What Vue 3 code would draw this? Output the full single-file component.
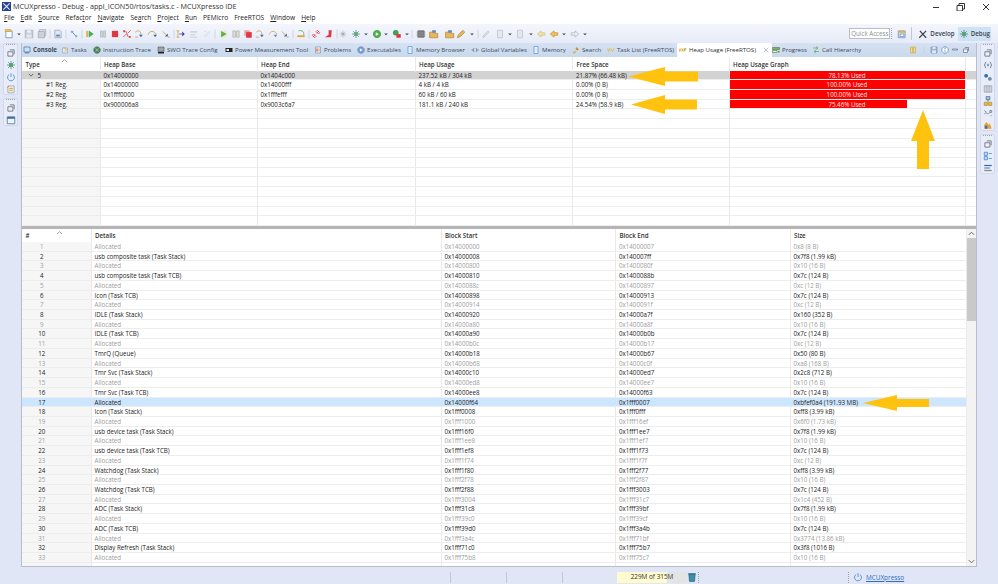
<template>
  <div class="ide">
    <div class="titlebar">
      <svg class="logo" viewBox="0 0 10 10"><rect width="10" height="10" fill="#26418f" /><path d="M1.5 1.5l7 7M8.5 1.5l-7 7" stroke="#dfe6ff" stroke-width="1.3" /></svg>
      <span class="title">MCUXpresso - Debug - appl_ICON50/rtos/tasks.c - MCUXpresso IDE</span>
      <div class="winctl">
        <svg viewBox="0 0 62 10"><path d="M0 5.5h6" stroke="#333" /><path d="M24 3.5h5.5v5.5h-5.5zM26 3.5v-2h5.5v5.5h-2" fill="none" stroke="#333" /><path d="M50 2l6 6M56 2l-6 6" stroke="#333" /></svg>
      </div>
    </div>

    <div class="menubar">
      <span v-for="m in menus" :key="m[0] + m[1]" class="menu">{{ m[0] }}<u>{{ m[1] }}</u>{{ m[2] }}</span>
    </div>

    <div class="toolbar">
      <span v-for="(t, i) in toolbar" :key="i" class="slot" :style="{ width: t.w + 'px' }">
        <svg class="ico" viewBox="0 0 16 16"><path v-for="(s, j) in glyphs[t.g]" :key="j" :d="s[0]" :fill="s[1] || 'none'" :stroke="s[2] || 'none'" /></svg>
      </span>
      <div class="tb-right">
        <span class="quick">Quick Access</span>
        <span class="grip-v"></span>
        <svg class="ico" viewBox="0 0 16 16"><path v-for="(s, j) in glyphs.persp" :key="j" :d="s[0]" :fill="s[1] || 'none'" :stroke="s[2] || 'none'" /></svg>
        <span class="vsep"></span>
        <span class="persp">
          <svg class="ico" viewBox="0 0 16 16"><path d="M2 14L13 3M3 3l10 11" stroke="#444" stroke-width="2" fill="none" /></svg>
          Develop
        </span>
        <span class="persp on">
          <svg class="ico" viewBox="0 0 16 16"><path v-for="(s, j) in glyphs.bug" :key="j" :d="s[0]" :fill="s[1] || 'none'" :stroke="s[2] || 'none'" /></svg>
          Debug
        </span>
      </div>
    </div>

    <div class="body">
      <aside class="rail">
        <div v-for="(grp, i) in leftRail" :key="i" class="railgroup">
          <i class="dots"></i>
          <svg v-for="g in grp" :key="g" class="ico" viewBox="0 0 16 16"><path v-for="(s, j) in glyphs[g]" :key="j" :d="s[0]" :fill="s[1] || 'none'" :stroke="s[2] || 'none'" /></svg>
        </div>
      </aside>

      <main class="panel">
        <div class="tabs">
          <span v-for="t in tabs" :key="t.label" class="tab" :class="{ active: t.active, bold: t.bold }" :style="{ width: t.w + 'px' }">
            <svg class="ico small" viewBox="0 0 16 16"><path v-for="(s, j) in glyphs[t.g]" :key="j" :d="s[0]" :fill="s[1] || 'none'" :stroke="s[2] || 'none'" /></svg>
            <span class="tablabel">{{ t.label }}</span>
            <svg v-if="t.active" class="closex" viewBox="0 0 8 8"><path d="M1 1l6 6M7 1L1 7" stroke="#9aa" fill="none" /></svg>
          </span>
          <div class="tabtools">
            <svg v-for="g in tabTools" :key="g" class="ico small" viewBox="0 0 16 16"><path v-for="(s, j) in glyphs[g]" :key="j" :d="s[0]" :fill="s[1] || 'none'" :stroke="s[2] || 'none'" /></svg>
          </div>
        </div>

        <section class="upper">
          <div class="grid top head">
            <div v-for="(h, i) in topHead" :key="i" class="cell">{{ h }}<svg v-if="i === 0" class="caret" viewBox="0 0 8 4"><path d="M1 3.5L4 .8l3 2.7" fill="none" stroke="#999" /></svg></div>
            <div class="cell"></div>
          </div>
          <div v-for="(r, i) in heapRows" :key="i" class="grid top row" :class="{ sel: i === 0 }">
            <div class="cell first" :class="{ child: i > 0 }">
              <svg v-if="i === 0" class="twist" viewBox="0 0 8 8"><path d="M1 2.5l3 3 3-3" fill="none" stroke="#444" /></svg>{{ r.type }}
            </div>
            <div class="cell">{{ r.base }}</div>
            <div class="cell">{{ r.end }}</div>
            <div class="cell">{{ r.usage }}</div>
            <div class="cell">{{ r.free }}</div>
            <div class="cell graph">
              <span class="fill" :style="{ width: r.bar + '%' }"></span>
              <span class="graphtext">{{ r.used }}</span>
            </div>
            <div class="cell"></div>
          </div>
          <div v-for="n in 13" :key="'e' + n" class="grid top row">
            <div class="cell first"></div>
            <div v-for="c in 6" :key="c" class="cell"></div>
          </div>
        </section>

        <div class="sash"></div>

        <section class="lower">
          <div class="tablewrap">
            <div class="grid btm head">
              <div v-for="(h, i) in blockHead" :key="h" class="cell">{{ h }}<svg v-if="i === 0" class="caret" viewBox="0 0 8 4"><path d="M1 3.5L4 .8l3 2.7" fill="none" stroke="#999" /></svg></div>
            </div>
            <div v-for="r in blockRows" :key="r.n" class="grid btm row" :class="{ dim: r.dim, picked: r.n === 17 }">
              <div class="cell first num">{{ r.n }}</div>
              <div class="cell">{{ r.details }}</div>
              <div class="cell">{{ r.start }}</div>
              <div class="cell">{{ r.end }}</div>
              <div class="cell">{{ r.size }}</div>
            </div>
            <div class="grid btm row">
              <div class="cell first"></div>
              <div v-for="c in 4" :key="c" class="cell"></div>
            </div>
          </div>
          <div class="scroll">
            <svg class="sarrow" viewBox="0 0 8 6"><path d="M1 4.5L4 1.5l3 3" fill="none" stroke="#555" /></svg>
            <div class="track"><div class="thumb"></div></div>
            <svg class="sarrow" viewBox="0 0 8 6"><path d="M1 1.5L4 4.5l3-3" fill="none" stroke="#555" /></svg>
          </div>
        </section>
      </main>

      <aside class="rail">
        <div v-for="(grp, i) in rightRail" :key="i" class="railgroup">
          <i class="dots"></i>
          <svg v-for="(g, k) in grp" :key="k" class="ico" viewBox="0 0 16 16"><path v-for="(s, j) in glyphs[g]" :key="j" :d="s[0]" :fill="s[1] || 'none'" :stroke="s[2] || 'none'" /></svg>
        </div>
      </aside>
    </div>

    <footer class="status">
      <span class="sline first-line"></span>
      <span class="sline"></span>
      <span class="sline"></span>
      <span class="heap"><span class="heapfill"></span><span class="heaptext">229M of 315M</span></span>
      <svg class="ico trash" viewBox="0 0 16 16"><path d="M3 4h10l-1 11H4z" fill="#3d8fa8" stroke="#2a6a80" /><path d="M2 3h12" stroke="#2a6a80" stroke-width="2" /></svg>
      <span class="grip-v g2"></span>
      <span class="grip-v g3"></span>
      <svg class="ico" viewBox="0 0 16 16"><path v-for="(s, j) in glyphs.power" :key="j" :d="s[0]" :fill="s[1] || 'none'" :stroke="s[2] || 'none'" /></svg>
      <a class="link">MCUXpresso</a>
    </footer>

    <svg class="notes" viewBox="0 0 998 584">
      <path v-for="a in arrows" :key="a" :d="a" fill="#ffc30f" />
    </svg>
  </div>
</template>

<script setup>
const menus = [
  ['', 'F', 'ile'], ['', 'E', 'dit'], ['', 'S', 'ource'], ['Refac', 't', 'or'], ['', 'N', 'avigate'],
  ['Se', 'a', 'rch'], ['', 'P', 'roject'], ['', 'R', 'un'], ['PEMicro', '', ''], ['FreeRTOS', '', ''],
  ['', 'W', 'indow'], ['', 'H', 'elp'],
]

const g = {
  grey: '#c9ced6',
  line: '#9aa3ae',
  red: '#e0242c',
  green: '#3aa53a',
  orange: '#e9a23b',
  blue: '#2f7fd0',
}

const glyphs = {
  new: [['M3 3h10v11H3z', '#fff', '#4f7fb5'], ['M2 1h9v3H2z', '#f2c04a', '#c99a2e']],
  drop: [['M5 7h6l-3 3z', '#333']],
  sep: [['M8 1v14', null, '#c3c9d4']],
  save: [['M2 2h12v12H2z', g.grey, g.line], ['M5 2h6v4H5z', '#eef0f4'], ['M4 9h8v5H4z', '#e3e6eb']],
  saveall: [['M4 1h10v10H4z', '#dde0e5', g.line], ['M2 4h10v10H2z', g.grey, g.line]],
  print: [['M3 2h8l2 2v10H3z', '#e2e7ef', '#8a9ab0'], ['M5 9h6v3H5z', '#4f7fb5']],
  skip: [['M3 3l10 10', null, '#2f5f9a'], ['M3 3h4v3H3z', '#7aa0cc'], ['M10 10h3v3h-3z', '#7aa0cc']],
  resume: [['M2 3h3v10H2z', '#d8ae42'], ['M6 2.5l8 5.5-8 5.5z', g.green]],
  suspend: [['M4 3h3v10H4zM9 3h3v10H9z', '#cfd3d9', '#aab0b8']],
  stop: [['M3 3h10v10H3z', g.red]],
  stopg: [['M2 2h9v9H2z', '#e8a0a0'], ['M5 5h9v9H5z', g.red]],
  disc: [['M2 13l5-5M9 7l5-5M6 3l4 10', null, g.red], ['M2 2h3v3H2zM11 11h3v3h-3z', g.red]],
  into: [['M2 5c5-4 9-2 9 4', null, '#c58a1e'], ['M8 9h6l-3 4z', '#2f5f9a'], ['M2 12h4v2H2z', '#d8b050']],
  over: [['M2 9c1-7 11-7 12 0', null, '#c58a1e'], ['M10 9h6l-3 4z', '#2f5f9a']],
  ret: [['M3 4l6 6', null, '#c58a1e'], ['M6 12h5V7z', '#2f5f9a'], ['M11 12h3v2h-3z', '#d8b050']],
  instr: [['M3 3v10', null, '#c8a030'], ['M5 8h6', null, '#2b2bb0'], ['M10 4l4 4-4 4z', '#2b2bb0'], ['M1 2h4v2H1zM1 12h4v2H1z', '#d8b050']],
  gdoc: [['M2 3h11v3H2zM2 8h8v2H2zM2 12h11v2H2z', '#cfd3d9']],
  gstep: [['M3 12l9-9M5 13l9-9', null, '#cfd3d9'], ['M3 3h4v2H3z', '#dde0e5']],
  play: [['M2 2h12v12H2z', '#e9ecd8'], ['M5 3l9 5-9 5z', '#55a83a']],
  pause: [['M3 3h4v10H3zM9 3h4v10H9z', '#dfe1d8', '#a9ad9f']],
  rback: [['M5 2c6 0 8 6 6 10', null, '#e0a030'], ['M2 8l6 5H2z', '#2f7fd0']],
  orng: [['M2 9c1-7 11-7 12 0', null, '#d59a2a', ], ['M9 9h6l-3 4z', '#5a83c0']],
  back: [['M4 3c6-2 10 2 8 8', null, '#3d9a3d'], ['M2 10h12v3H2z', '#e0a030']],
  link: [['M3 13l4-4M9 7l4-4', null, g.red], ['M2 10l4 4 2-2-4-4zM8 4l4 4 2-2-4-4z', null, g.red]],
  redl: [['M9 2v7L3 13h10l1-11z', g.red]],
  gbug: [['M8 2v12M2 8h12M4 4l8 8M12 4l-8 8', null, '#b7bbc2'], ['M6 6h4v4H6z', '#a0a5ad']],
  bug: [['M8 1.5v13M1.5 8h13M3.5 3.5l9 9M12.5 3.5l-9 9', null, '#3d8a72'], ['M5 5h6v6H5z', '#55a36f']],
  run: [['M8 1.5a6.5 6.5 0 1 0 .01 0z', g.green], ['M6 5l5 3-5 3z', '#fff']],
  runred: [['M6 1.5a4.5 4.5 0 1 0 .01 0z', '#2f9a3a'], ['M7 8h7v6H7z', g.red]],
  chip: [['M3 3h10v10H3z', '#666', '#444'], ['M1 5h14M1 8h14M1 11h14', null, '#999']],
  folder: [['M1 5h6l1 2h6v7H1z', '#eab24a', '#b07f20'], ['M5 2h6v4H5z', '#5a7fb0']],
  pencil: [['M2 14l2-5 7-7 3 3-7 7z', '#eab24a', '#b07f20']],
  gpen: [['M3 14l2-5 6-6 2 2-6 6z', '#dfe1e6', '#b8bcc4']],
  gdown: [['M4 2h8v12H4z', '#e6e8ec', '#b8bcc4']],
  arrl: [['M2 8l6-5v3h6v4H8v3z', '#f4e09a', '#d5c070']],
  arrlo: [['M2 8l6-5v3h6v4H8v3z', '#f2c14a', '#c8861e']],
  arrg: [['M14 8L8 3v3H2v4h6v3z', '#e9edf3', '#aab0ba']],
  persp: [['M2 3h11v11H2z', '#cfe0f0', '#6f8db0'], ['M2 3h11v3H2z', '#e0b050'], ['M5 8h6v4H5z', '#fff', '#6f8db0']],
  restore: [['M3 6h8v7H3z', '#eef1f8', '#55606e'], ['M6 3h7v7', null, '#55606e']],
  power: [['M5 4a5.5 5.5 0 1 0 6 0', null, '#2f7fd0'], ['M8 2v6', null, '#2f7fd0']],
  task: [['M3 3h10v11H3z', '#f3f0d8', '#8aa0b8'], ['M2 6l3-3M5 7h6M5 10h6', null, '#c88a1e']],
  win: [['M2 3h12v11H2z', '#eef3fa', '#45698f'], ['M2 3h12v3H2z', '#45698f']],
  console: [['M2 2h12v10H2z', '#cfe0f5', '#2f5f9a'], ['M4 13h8v1.5H4z', '#2f5f9a']],
  tasks: [['M3 4h10v10H3z', '#e8edd8', '#8aa0b8'], ['M5 2l6 6-3 3', null, '#c58a1e']],
  trace: [['M8 1.5a6.5 6.5 0 1 0 .01 0z', '#4f8a5c', '#2f5f4a'], ['M5 5l6 6M11 5l-6 6', null, '#b9d8b9']],
  swo: [['M2 2h12v9H2z', '#9aa3ae', '#555'], ['M2 12h12v3H2z', '#222']],
  pmt: [['M1 4h14v8H1z', '#222'], ['M3 6h5v4H3z', '#eee']],
  problems: [['M3 2h10v12H3z', '#eef1f8', '#6f8db0'], ['M5 5h2v6H5z', g.red], ['M9 5h2v6H9z', '#e9a23b']],
  exec: [['M8 1.5a6.5 6.5 0 1 0 .01 0z', '#7ba5dc', '#4c74ad'], ['M6 5l5 3-5 3z', '#fff']],
  mem: [['M4 1h8v14H4z', '#fff', '#2f7fd0'], ['M6 3v10M10 3v10', null, '#8fbbea']],
  vars: [['M1 8h4M11 8h4', null, '#555'], ['M6 4l-2 4 2 4M10 4l2 4-2 4', null, '#555']],
  search: [['M2 14l5-5 2 2-5 5z', '#e9b24a'], ['M9 2l5 5-4 2-3-3z', '#cf8e2b'], ['M2 11l3 3', null, '#70a0d0']],
  nxp: [['M1 5l2 6 2-6 2 6M8 5l3 6M14 5l-3 6', null, '#e5b21c']],
  nxpa: [['M1 5v6l3-6v6', null, '#e5a21c'], ['M6 5l3 6M9 5l-3 6', null, '#d87a1c'], ['M11 11V5h3v3h-3', null, '#8aa81c']],
  progress: [['M1 3h14v4H1z', '#7ab06a', '#4f7a46'], ['M1 9h9v4H1z', '#e6ecd8', '#4f7a46'], ['M12 10h3v3h-3z', '#3aa53a']],
  hier: [['M2 4h9M8 1l4 3-4 3', null, '#3aa53a'], ['M14 11H5M8 8l-4 3 4 3', null, '#3aa53a']],
  pausey: [['M3 2h4v12H3zM9 2h4v12H9z', '#f2dc8a', '#c8a63c']],
  savegr: [['M2 2h12v12H2z', '#9db7d4', '#6b8cae'], ['M5 2h6v4H5z', '#dfe8f2'], ['M4 9h8v5H4z', '#dfe8f2']],
  info: [['M8 1.5a6.5 6.5 0 1 0 .01 0z', '#fff', '#2f6fb0'], ['M8 7v5', null, '#2f6fb0'], ['M7 3.5h2v2H7z', '#2f6fb0']],
  min: [['M3 6h10v2H3z', '#fff', '#55606e']],
  vars2: [['M5 3C3 3 4 8 2 8c2 0 1 5 3 5M11 3c2 0 1 5 3 5-2 0-1 5-3 5', null, '#555'], ['M7 6l2 4M9 6l-2 4', null, '#2f7fd0']],
  gears: [['M5 3a3 3 0 1 0 .01 0z', '#2f6fb0'], ['M11 8a3 3 0 1 0 .01 0z', '#6f8da8']],
  mreg: [['M2 3h12v10H2z', '#e4e9f2', '#8f99a8'], ['M5 3v10M8 3v10M11 3v10', null, '#8f99a8']],
  tree: [['M5 1h6v5H5z', '#a8c8e8', '#45698f'], ['M2 10h5v5H2z', '#e8c05a', '#b08a20'], ['M9 10h5v5H9z', '#e8c05a', '#b08a20'], ['M8 6v3', null, '#555']],
  scope: [['M2 10c3-6 5 4 10-4', null, '#6a7a8a'], ['M2 4l4 3M12 13l2-2', null, '#6a7a8a'], ['M11 4h3v3h-3z', null, '#6a7a8a']],
  chart: [['M2 14V7l4-4 3 5 2-3 3 9z', '#e9a23b'], ['M3 9h4v5H3z', '#3f6fa8']],
  list2: [['M2 2h5v5H2z', '#cfe0f5', '#2f7fd0'], ['M2 9h5v5H2z', '#cfe0f5', '#2f7fd0'], ['M9 4h5M9 12h5', null, '#2f7fd0']],
  lines: [['M2 3h12v2H2z', '#2f6fb0'], ['M2 7h9v2H2z', '#7a8a9c'], ['M2 11h12v2H2z', '#7a8a9c']],
}

// toolbar icons by their x position
const marks = [
  [9, 'new'], [19, 'drop'], [29, 'save'], [42, 'saveall'], [50, 'sep'], [58, 'print'], [66, 'sep'], [74, 'skip'],
  [82, 'sep'], [90, 'resume'], [103, 'suspend'], [115, 'stop'], [127, 'disc'], [139, 'into'], [152, 'over'],
  [166, 'ret'], [174, 'sep'], [181, 'instr'], [194, 'gdoc'], [207, 'gstep'], [215, 'sep'], [223, 'play'],
  [236, 'pause'], [248, 'stopg'], [260, 'into'], [273, 'orng'], [285, 'ret'], [293, 'sep'], [301, 'back'],
  [309, 'sep'], [316, 'link'], [328, 'redl'], [337, 'sep'], [343, 'gbug'], [356, 'bug'], [366, 'drop'],
  [377, 'run'], [386, 'drop'], [397, 'runred'], [407, 'drop'], [412, 'sep'], [421, 'chip'], [434, 'folder'],
  [450, 'folder'], [461, 'pencil'], [472, 'drop'], [478, 'sep'], [486, 'gpen'], [500, 'gdown'], [510, 'drop'],
  [520, 'gdown'], [531, 'drop'], [541, 'arrl'], [554, 'arrlo'], [564, 'drop'], [575, 'arrg'], [585, 'drop'],
]
const toolbar = marks.map((m, i) => ({
  g: m[1],
  w: i < marks.length - 1 ? marks[i + 1][0] - m[0] : 11,
}))

const tabs = [
  { label: 'Console', g: 'console', w: 38, bold: true },
  { label: 'Tasks', g: 'tasks', w: 32 },
  { label: 'Instruction Trace', g: 'trace', w: 64 },
  { label: 'SWO Trace Config', g: 'swo', w: 68 },
  { label: 'Power Measurement Tool', g: 'pmt', w: 89 },
  { label: 'Problems', g: 'problems', w: 43 },
  { label: 'Executables', g: 'exec', w: 49 },
  { label: 'Memory Browser', g: 'mem', w: 65 },
  { label: 'Global Variables', g: 'vars', w: 61 },
  { label: 'Memory', g: 'mem', w: 40 },
  { label: 'Search', g: 'search', w: 35 },
  { label: 'Task List (FreeRTOS)', g: 'nxp', w: 70 },
  { label: 'Heap Usage (FreeRTOS)', g: 'nxpa', w: 95, active: true },
  { label: 'Progress', g: 'progress', w: 40 },
  { label: 'Call Hierarchy', g: 'hier', w: 50 },
]
const tabTools = ['pausey', 'sep', 'savegr', 'info', 'min', 'restore']

const leftRail = [['restore', 'bug', 'power', 'task'], ['restore', 'win']]
const rightRail = [
  ['restore', 'vars2', 'gears', 'mreg', 'tree', 'scope', 'chart'],
  ['restore', 'list2', 'lines'],
]

const topHead = ['Type', 'Heap Base', 'Heap End', 'Heap Usage', 'Free Space', 'Heap Usage Graph']
const heapRows = [
  { type: '5', base: '0x14000000', end: '0x1404c000', usage: '237.52 kB / 304 kB', free: '21.87% (66.48 kB)', used: '78.13% Used', bar: 100 },
  { type: '#1 Reg.', base: '0x14000000', end: '0x14000fff', usage: '4 kB / 4 kB', free: '0.00% (0 B)', used: '100.00% Used', bar: 100 },
  { type: '#2 Reg.', base: '0x1fff0000', end: '0x1fffefff', usage: '60 kB / 60 kB', free: '0.00% (0 B)', used: '100.00% Used', bar: 100 },
  { type: '#3 Reg.', base: '0x900006a8', end: '0x9003c6a7', usage: '181.1 kB / 240 kB', free: '24.54% (58.9 kB)', used: '75.46% Used', bar: 75.46 },
]

const blockHead = ['#', 'Details', 'Block Start', 'Block End', 'Size']
const A = 'Allocated'
const blocks = [
  [A, '0x14000000', '0x14000007', '0x8 (8 B)'],
  ['usb composite task (Task Stack)', '0x14000008', '0x140007ff', '0x7f8 (1.99 kB)'],
  [A, '0x14000800', '0x1400080f', '0x10 (16 B)'],
  ['usb composite task (Task TCB)', '0x14000810', '0x1400088b', '0x7c (124 B)'],
  [A, '0x1400088c', '0x14000897', '0xc (12 B)'],
  ['Icon (Task TCB)', '0x14000898', '0x14000913', '0x7c (124 B)'],
  [A, '0x14000914', '0x1400091f', '0xc (12 B)'],
  ['IDLE (Task Stack)', '0x14000920', '0x14000a7f', '0x160 (352 B)'],
  [A, '0x14000a80', '0x14000a8f', '0x10 (16 B)'],
  ['IDLE (Task TCB)', '0x14000a90', '0x14000b0b', '0x7c (124 B)'],
  [A, '0x14000b0c', '0x14000b17', '0xc (12 B)'],
  ['TmrQ (Queue)', '0x14000b18', '0x14000b67', '0x50 (80 B)'],
  [A, '0x14000b68', '0x14000c0f', '0xa8 (168 B)'],
  ['Tmr Svc (Task Stack)', '0x14000c10', '0x14000ed7', '0x2c8 (712 B)'],
  [A, '0x14000ed8', '0x14000ee7', '0x10 (16 B)'],
  ['Tmr Svc (Task TCB)', '0x14000ee8', '0x14000f63', '0x7c (124 B)'],
  [A, '0x14000f64', '0x1fff0007', '0xbfef0a4 (191.93 MB)'],
  ['Icon (Task Stack)', '0x1fff0008', '0x1fff0fff', '0xff8 (3.99 kB)'],
  [A, '0x1fff1000', '0x1fff16ef', '0x6f0 (1.73 kB)'],
  ['usb device task (Task Stack)', '0x1fff16f0', '0x1fff1ee7', '0x7f8 (1.99 kB)'],
  [A, '0x1fff1ee8', '0x1fff1ef7', '0x10 (16 B)'],
  ['usb device task (Task TCB)', '0x1fff1ef8', '0x1fff1f73', '0x7c (124 B)'],
  [A, '0x1fff1f74', '0x1fff1f7f', '0xc (12 B)'],
  ['Watchdog (Task Stack)', '0x1fff1f80', '0x1fff2f77', '0xff8 (3.99 kB)'],
  [A, '0x1fff2f78', '0x1fff2f87', '0x10 (16 B)'],
  ['Watchdog (Task TCB)', '0x1fff2f88', '0x1fff3003', '0x7c (124 B)'],
  [A, '0x1fff3004', '0x1fff31c7', '0x1c4 (452 B)'],
  ['ADC (Task Stack)', '0x1fff31c8', '0x1fff39bf', '0x7f8 (1.99 kB)'],
  [A, '0x1fff39c0', '0x1fff39cf', '0x10 (16 B)'],
  ['ADC (Task TCB)', '0x1fff39d0', '0x1fff3a4b', '0x7c (124 B)'],
  [A, '0x1fff3a4c', '0x1fff71bf', '0x3774 (13.86 kB)'],
  ['Display Refresh (Task Stack)', '0x1fff71c0', '0x1fff75b7', '0x3f8 (1016 B)'],
  [A, '0x1fff75b8', '0x1fff75c7', '0x10 (16 B)'],
]
const blockRows = blocks.map((b, i) => ({
  n: i + 1,
  details: b[0],
  start: b[1],
  end: b[2],
  size: b[3],
  dim: b[0] === A && i !== 16,
}))

// the yellow call-outs drawn on top of the screenshot
const arrows = [
  'M628 76.5L665 67V71.5H698V81.5H665V86Z',
  'M631 104.5L665 95V99.5H697V109.5H665V114Z',
  'M923 110L935 141H929V169H917V141H911Z',
  'M863 403L897 395V399H929V407H897V411Z',
]
</script>

<style scoped>
.ide {
  position: relative;
  width: 998px;
  height: 584px;
  overflow: hidden;
  display: flex;
  flex-direction: column;
  background: #e1e6f6;
  font-family: "Open Sans", "Noto Sans", sans-serif;
  font-size: 6.2px;
  color: #222;
}
.ico {
  width: 10px;
  height: 10px;
  flex: none;
  display: block;
  stroke-width: 1.2;
}
.ico.small {
  width: 8px;
  height: 8px;
}
.titlebar {
  height: 11px;
  flex: none;
  background: #fff;
  display: flex;
  align-items: center;
  padding: 1px 0 0 2px;
  box-sizing: border-box;
}
.logo {
  width: 9px;
  height: 9px;
  margin-right: 2px;
}
.title {
  font-size: 7.2px;
  color: #333;
}
.winctl {
  margin-left: auto;
  margin-right: 9px;
  width: 56px;
  height: 9px;
}
.winctl svg {
  width: 62px;
  height: 10px;
  overflow: visible;
}
.menubar {
  height: 13px;
  flex: none;
  background: #fff;
  display: flex;
  align-items: center;
  gap: 6.05px;
  padding-left: 4px;
  font-size: 6.6px;
  color: #222;
}
.toolbar {
  height: 19px;
  flex: none;
  display: flex;
  align-items: center;
  padding-left: 4px;
  background: linear-gradient(#f4f6fc, #e6ebf8);
  box-sizing: border-box;
}
.slot {
  flex: none;
  display: block;
  opacity: 0.9;
}
.tb-right {
  margin-left: auto;
  display: flex;
  align-items: center;
  gap: 4px;
  padding-right: 7px;
  font-weight: 600;
  font-size: 6.2px;
  color: #3a4652;
}
.quick {
  width: 41px;
  height: 11px;
  line-height: 10px;
  text-align: center;
  box-sizing: border-box;
  background: #fff;
  border: 1px solid #b9bec7;
  font-weight: 400;
  color: #8a8f96;
  font-size: 6.2px;
  white-space: nowrap;
  margin-right: -3px;
}
.grip-v {
  display: inline-block;
  width: 1px;
  height: 11px;
  border-left: 1px dotted #9aa3ae;
}
.vsep {
  width: 1px;
  height: 13px;
  background: #c3c9d4;
}
.persp {
  display: flex;
  align-items: center;
  gap: 2px;
  height: 14px;
  padding: 0 2px;
}
.persp.on {
  background: #cfe1f5;
  border-radius: 1px;
  padding: 0 1px;
  margin-left: -3px;
}
.body {
  flex: 1;
  min-height: 0;
  display: flex;
}
.rail {
  width: 21px;
  flex: none;
  padding: 0 3px;
  box-sizing: border-box;
  display: flex;
  flex-direction: column;
  gap: 3px;
}
.railgroup {
  display: flex;
  flex-direction: column;
  align-items: center;
  gap: 2px;
  background: #e9edf9;
  border: 1px solid #d3d9ea;
  border-radius: 2px;
}
.dots {
  width: 9px;
  height: 1px;
  border-top: 1px dotted #9aa3ae;
}
.panel {
  flex: 1;
  min-width: 0;
  display: flex;
  flex-direction: column;
  margin-bottom: 3px;
  background: #fff;
  border: 1px solid #b7bdc9;
  border-top: none;
}
.tabs {
  height: 14px;
  flex: none;
  display: flex;
  align-items: stretch;
  background: linear-gradient(#d6e2f2, #c9d8ec);
  padding-left: 1px;
  font-size: 6.1px;
  color: #3c4a58;
}
.tab {
  flex: none;
  display: flex;
  align-items: center;
  gap: 2px;
  white-space: nowrap;
  box-sizing: border-box;
  padding-bottom: 1px;
}
.tab.bold .tablabel {
  font-weight: 700;
}
.tab.active {
  background: #fff;
  color: #333;
  padding-left: 2px;
  border-radius: 2px 2px 0 0;
}
.closex {
  width: 6px;
  height: 6px;
  margin-left: 5px;
}
.tabtools {
  margin-left: auto;
  display: flex;
  align-items: center;
  gap: 2.6px;
  padding-right: 6px;
}
.upper {
  height: 169px;
  flex: none;
  overflow: hidden;
  background: #fff;
}
.sash {
  height: 2.5px;
  flex: none;
  background: #b5b5b5;
}
.lower {
  flex: 1;
  min-height: 0;
  display: flex;
}
.tablewrap {
  flex: 1;
  min-width: 0;
  overflow: hidden;
}
.grid {
  display: grid;
}
.grid.top {
  grid-template-columns: 78.5px 157px 158px 157.5px 156.5px 236px 1fr;
}
.grid.btm {
  grid-template-columns: 69.5px 350px 174.5px 174.5px 1fr;
}
.head {
  height: 13.5px;
  font-weight: 600;
  color: #333;
}
.head .cell {
  position: relative;
  line-height: 14px;
  padding-left: 3.5px;
}
.upper .head .cell {
  line-height: 15px;
}
.caret {
  position: absolute;
  left: 50%;
  top: 2px;
  width: 7px;
  height: 3.5px;
}
.row {
  height: 9.72px;
  line-height: 9.8px;
  box-sizing: border-box;
  border-bottom: 1px solid #ededed;
  grid-template-rows: 8.72px;
}
.cell {
  min-width: 0;
  white-space: nowrap;
  padding-left: 3px;
  border-right: 1px solid #e9e9e9;
  box-sizing: border-box;
}
.cell:last-child {
  border-right: none;
}
.first {
  background: #f6f6f6;
  padding-left: 5.5px;
}
.first.child {
  padding-left: 24px;
}
.num {
  text-align: center;
  padding: 0 29px 0 0;
}
.twist {
  width: 6px;
  height: 6px;
  margin-right: 4px;
}
.sel,
.sel .cell {
  background: #d2d2d2;
}
.sel .cell {
  border-right-color: #d2d2d2;
}
.graph {
  position: relative;
  padding: 0;
  text-align: center;
  color: #ffe9e9;
}
.sel .graph {
  background: #fff;
}
.fill {
  position: absolute;
  left: 0;
  top: 0;
  bottom: 0;
  background: #ff0000;
}
.graphtext {
  position: relative;
}
.dim {
  color: #9c9c9c;
}
.picked,
.picked .cell {
  background: #cce6ff;
  color: #222;
}
.picked .cell {
  border-right-color: #cce6ff;
}
.scroll {
  width: 10px;
  flex: none;
  background: #f3f3f3;
  display: flex;
  flex-direction: column;
  align-items: center;
  border-left: 1px solid #ececec;
  box-sizing: border-box;
}
.sarrow {
  width: 7px;
  height: 9px;
  flex: none;
}
.track {
  flex: 1;
  align-self: stretch;
}
.thumb {
  height: 83px;
  background: #c9c9c9;
}
.status {
  height: 14px;
  flex: none;
  display: flex;
  align-items: center;
  padding-left: 450px;
  color: #333;
}
.sline {
  width: 1px;
  height: 11px;
  background: #c2c7d3;
  margin-right: 55px;
}
.sline:nth-child(3) {
  margin-right: 54px;
}
.heap {
  position: relative;
  width: 70px;
  height: 11px;
  background: #e4e4e4;
  line-height: 10px;
  text-align: center;
  color: #333;
  font-size: 6.4px;
}
.heapfill {
  position: absolute;
  left: 0;
  top: 0;
  bottom: 0;
  width: 72%;
  background: #fdfbcf;
}
.heaptext {
  position: relative;
}
.trash {
  margin-left: 0;
  width: 10px;
  height: 10px;
}
.g2 {
  margin-left: 1px;
}
.g3 {
  margin-left: 148px;
  margin-right: 3px;
}
.link {
  margin-left: 3px;
  color: #2a6fc0;
  text-decoration: underline;
  font-size: 6.4px;
}
.notes {
  position: absolute;
  left: 0;
  top: 0;
  width: 998px;
  height: 584px;
  pointer-events: none;
}
</style>
